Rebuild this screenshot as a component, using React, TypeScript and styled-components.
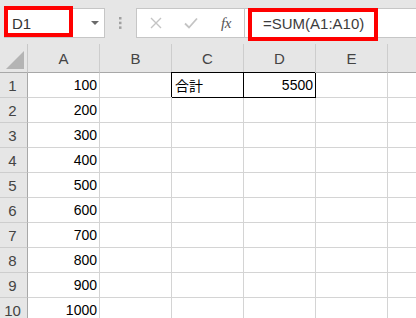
import * as React from 'react'
import styled, { createGlobalStyle, css } from 'styled-components'

const GlobalStyle = createGlobalStyle`
    html, body {
        margin: 0;
        padding: 0;
        width: 416px;
        height: 318px;
        overflow: hidden;
        background: #ffffff;
    }
    body {
        font-family: "Liberation Sans", "Noto Sans CJK JP", sans-serif;
    }
`

// the last column only peeks in at the right edge, so its letter is out of view
const COLUMNS = ['A', 'B', 'C', 'D', 'E', 'F']
const VALUES = [100, 200, 300, 400, 500, 600, 700, 800, 900, 1000]

const Wrapper = styled.div`
    width: 416px;
    height: 318px;
    overflow: hidden;
    background: #e6e6e6;
`

const TopBar = styled.div`
    display: flex;
    align-items: flex-start;
    height: 44px;
    padding: 8px 0 0 4px;
    box-sizing: border-box;
`

const NameBox = styled.div`
    position: relative;
    width: 101px;
    height: 30px;
    box-sizing: border-box;
    background: #ffffff;
    border: 1px solid #c6c6c6;
    display: flex;
    align-items: center;
    padding-left: 7px;
    font-size: 15px;
    color: #333333;
`

const DropArrow = styled.span`
    position: absolute;
    right: 5px;
    top: 12px;
    width: 0;
    height: 0;
    border-left: 4px solid transparent;
    border-right: 4px solid transparent;
    border-top: 4px solid #6a6a6a;
`

const Highlight = styled.div<{ $left: number; $top: number; $w: number; $h: number }>`
    position: absolute;
    left: ${p => p.$left}px;
    top: ${p => p.$top}px;
    width: ${p => p.$w}px;
    height: ${p => p.$h}px;
    box-sizing: border-box;
    border: 4px solid #ff0000;
    pointer-events: none;
`

const Grip = styled.div`
    width: 31px;
    height: 30px;
    display: flex;
    align-items: center;
    justify-content: center;
`

const ButtonBox = styled.div`
    display: flex;
    align-items: center;
    width: 109px;
    height: 30px;
    box-sizing: border-box;
    background: #ffffff;
    border: 1px solid #c6c6c6;
`

const IconButton = styled.div<{ $w: number }>`
    width: ${p => p.$w}px;
    height: 100%;
    display: flex;
    align-items: center;
    justify-content: center;
`

const FxLabel = styled.span`
    font-family: "Liberation Serif", serif;
    font-style: italic;
    font-size: 15px;
    color: #555555;
    letter-spacing: -0.5px;
`

const FormulaField = styled.div`
    position: relative;
    flex: 1;
    height: 30px;
    box-sizing: border-box;
    background: #ffffff;
    border: 1px solid #c6c6c6;
    border-right: none;
    margin-left: -1px;
    display: flex;
    align-items: center;
    padding-left: 18px;
    font-size: 15px;
    color: #3c3c3c;
`

const Sheet = styled.div`
    display: grid;
    grid-template-columns: 28px repeat(6, 72px);
    grid-template-rows: 29px repeat(10, 25px);
    background: #ffffff;
`

const headerBase = css`
    box-sizing: border-box;
    background: #e6e6e6;
    color: #444444;
    font-size: 15px;
    display: flex;
    align-items: center;
    justify-content: center;
`

const Corner = styled.div`
    ${headerBase};
    position: relative;
    border-right: 1px solid #c8c8c8;
    border-bottom: 1px solid #a8a8a8;
`

const CornerTriangle = styled.span`
    position: absolute;
    right: 3px;
    bottom: 3px;
    width: 0;
    height: 0;
    border-left: 18px solid transparent;
    border-bottom: 18px solid #b4b4b4;
`

const ColHeader = styled.div<{ $hidden?: boolean }>`
    ${headerBase};
    border-right: 1px solid #cdcdcd;
    border-bottom: 1px solid #a8a8a8;
    padding-top: 1px;
    color: ${p => (p.$hidden ? 'transparent' : '#444444')};
`

const RowHeader = styled.div`
    ${headerBase};
    border-right: 1px solid #a8a8a8;
    border-bottom: 1px solid #cdcdcd;
    padding-right: 2px;
`

const Cell = styled.div<{ $align?: 'left' | 'right'; $boxed?: boolean }>`
    box-sizing: border-box;
    border-right: 1px solid #d4d4d4;
    border-bottom: 1px solid #d4d4d4;
    display: flex;
    align-items: center;
    justify-content: ${p => (p.$align === 'left' ? 'flex-start' : 'flex-end')};
    padding: 0 2px 0 3px;
    font-size: 14px;
    color: #000000;
    white-space: nowrap;
    ${p => p.$boxed && css`
        border-right-color: #000000;
        border-bottom-color: #000000;
        box-shadow: -1px -1px 0 #000000;
    `}
`

const CrossIcon = () => (
    <svg width="12" height="12" viewBox="0 0 12 12">
        <path d="M1 1 L11 11 M11 1 L1 11" stroke="#c4c4c4" strokeWidth="1.4" fill="none" />
    </svg>
)

const CheckIcon = () => (
    <svg width="14" height="12" viewBox="0 0 14 12">
        <path d="M1 6.5 L5 10.5 L13 1.5" stroke="#c4c4c4" strokeWidth="1.8" fill="none" />
    </svg>
)

const GripDots = () => (
    <svg width="3" height="12" viewBox="0 0 3 12">
        <rect x="0" y="0" width="2.5" height="2.5" fill="#a0a0a0" />
        <rect x="0" y="4.7" width="2.5" height="2.5" fill="#a0a0a0" />
        <rect x="0" y="9.4" width="2.5" height="2.5" fill="#a0a0a0" />
    </svg>
)

const cellContent = (row: number, col: string) => {
    if (col === 'A') return { text: String(VALUES[row]), align: 'right' as const, boxed: false }
    if (row === 0 && col === 'C') return { text: '合計', align: 'left' as const, boxed: true }
    if (row === 0 && col === 'D') return { text: '5500', align: 'right' as const, boxed: true }
    return { text: '', align: 'right' as const, boxed: false }
}

const App = () => {
    return (
        <Wrapper>
            <GlobalStyle />
            <TopBar>
                <NameBox>
                    D1
                    <DropArrow />
                    <Highlight $left={-1} $top={-3} $w={69} $h={31} />
                </NameBox>
                <Grip>
                    <GripDots />
                </Grip>
                <ButtonBox>
                    <IconButton $w={37}><CrossIcon /></IconButton>
                    <IconButton $w={34}><CheckIcon /></IconButton>
                    <IconButton $w={36}><FxLabel>fx</FxLabel></IconButton>
                </ButtonBox>
                <FormulaField>
                    =SUM(A1:A10)
                    <Highlight $left={3} $top={-1} $w={130} $h={33} />
                </FormulaField>
            </TopBar>
            <Sheet>
                <Corner><CornerTriangle /></Corner>
                {COLUMNS.map((col, i) => (
                    <ColHeader key={col} $hidden={i === COLUMNS.length - 1}>
                        {i === COLUMNS.length - 1 ? '' : col}
                    </ColHeader>
                ))}
                {VALUES.map((_, row) => (
                    <React.Fragment key={row}>
                        <RowHeader>{row + 1}</RowHeader>
                        {COLUMNS.map(col => {
                            const { text, align, boxed } = cellContent(row, col)
                            return (
                                <Cell key={col} $align={align} $boxed={boxed}>{text}</Cell>
                            )
                        })}
                    </React.Fragment>
                ))}
            </Sheet>
        </Wrapper>
    )
}

export default App
